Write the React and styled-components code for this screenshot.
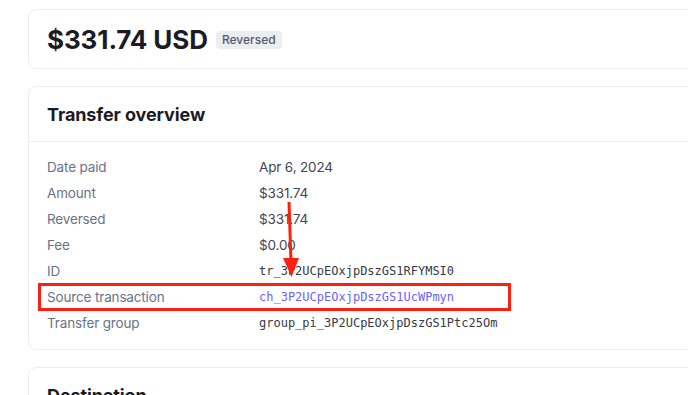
import React from "react";
import styled, { createGlobalStyle } from "styled-components";

const GlobalStyle = createGlobalStyle`
  html, body {
    margin: 0;
    padding: 0;
    background: #ffffff;
    overflow: hidden;
  }
  body {
    font-family: Inter, "Noto Sans", Arial, sans-serif;
    -webkit-font-smoothing: antialiased;
  }
`;

const Page = styled.div`
  position: relative;
  width: 688px;
  height: 395px;
  overflow: hidden;
  padding: 9px 0 0 28px;
  box-sizing: border-box;
  display: flex;
  flex-direction: column;
  gap: 17px;
`;

const Card = styled.div`
  width: 720px;
  flex-shrink: 0;
  border: 1px solid #ebeef1;
  border-radius: 8px;
  background: #fff;
  box-sizing: border-box;
`;

const SummaryRow = styled.div`
  height: 58px;
  display: flex;
  align-items: center;
  gap: 8px;
  padding: 0 18px;
`;

const Amount = styled.h1`
  margin: 0;
  font-size: 26px;
  font-weight: 700;
  color: #1a1b25;
  letter-spacing: -0.1px;
`;

const Badge = styled.span`
  background: #ebeef1;
  color: #545969;
  font-size: 12px;
  font-weight: 500;
  padding: 2px 6px;
  border-radius: 4px;
  line-height: 14px;
  margin-top: 1px;
`;

const CardHeader = styled.div`
  height: 54px;
  display: flex;
  align-items: center;
  padding: 0 18px;
  border-bottom: 1px solid #ebeef1;
`;

const Title = styled.h2`
  margin: 0;
  font-size: 18px;
  font-weight: 700;
  color: #1a1b25;
  letter-spacing: -0.1px;
`;

const List = styled.div`
  padding: 12px 18px 13px;
  display: flex;
  flex-direction: column;
`;

const Row = styled.div`
  height: 26px;
  display: grid;
  grid-template-columns: 212px 1fr;
  align-items: center;
`;

const Label = styled.span`
  font-size: 13.5px;
  letter-spacing: -0.15px;
  color: #687385;
`;

const Value = styled.span`
  font-size: ${(p) => (p.$mono ? "12px" : "13.5px")};
  letter-spacing: ${(p) => (p.$mono ? "0" : "-0.15px")};
  font-family: ${(p) =>
    p.$mono ? '"DejaVu Sans Mono", "Liberation Mono", monospace' : "inherit"};
  color: ${(p) => (p.$link ? "#6c63ff" : p.$mono ? "#353a44" : "#414552")};
`;

const HighlightBox = styled.div`
  position: absolute;
  left: 38px;
  top: 283px;
  width: 473px;
  height: 28px;
  border: 3px solid #ff1f0f;
  box-sizing: border-box;
`;

const Arrow = styled.svg`
  position: absolute;
  left: 278px;
  top: 200px;
`;

const rows = [
  { label: "Date paid", value: "Apr 6, 2024" },
  { label: "Amount", value: "$331.74" },
  { label: "Reversed", value: "$331.74" },
  { label: "Fee", value: "$0.00" },
  { label: "ID", value: "tr_3P2UCpEOxjpDszGS1RFYMSI0", mono: true },
  { label: "Source transaction", value: "ch_3P2UCpEOxjpDszGS1UcWPmyn", mono: true, link: true },
  { label: "Transfer group", value: "group_pi_3P2UCpEOxjpDszGS1Ptc25Om", mono: true },
];

const App = () => {
  return (
    <>
      <GlobalStyle />
      <Page>
        <Card>
          <SummaryRow>
            <Amount>$331.74 USD</Amount>
            <Badge>Reversed</Badge>
          </SummaryRow>
        </Card>

        <Card>
          <CardHeader>
            <Title>Transfer overview</Title>
          </CardHeader>
          <List>
            {rows.map((r) => (
              <Row key={r.label}>
                <Label>{r.label}</Label>
                <Value $mono={r.mono} $link={r.link}>
                  {r.value}
                </Value>
              </Row>
            ))}
          </List>
        </Card>

        <Card>
          <CardHeader>
            <Title>Destination</Title>
          </CardHeader>
        </Card>

        <HighlightBox />
        <Arrow width="24" height="80" viewBox="0 0 24 80">
          <line x1="11" y1="2" x2="13" y2="62" stroke="#ff1f0f" strokeWidth="3" />
          <polygon points="5,58 21,58 13.5,77" fill="#ff1f0f" />
        </Arrow>
      </Page>
    </>
  );
};

export default App;
